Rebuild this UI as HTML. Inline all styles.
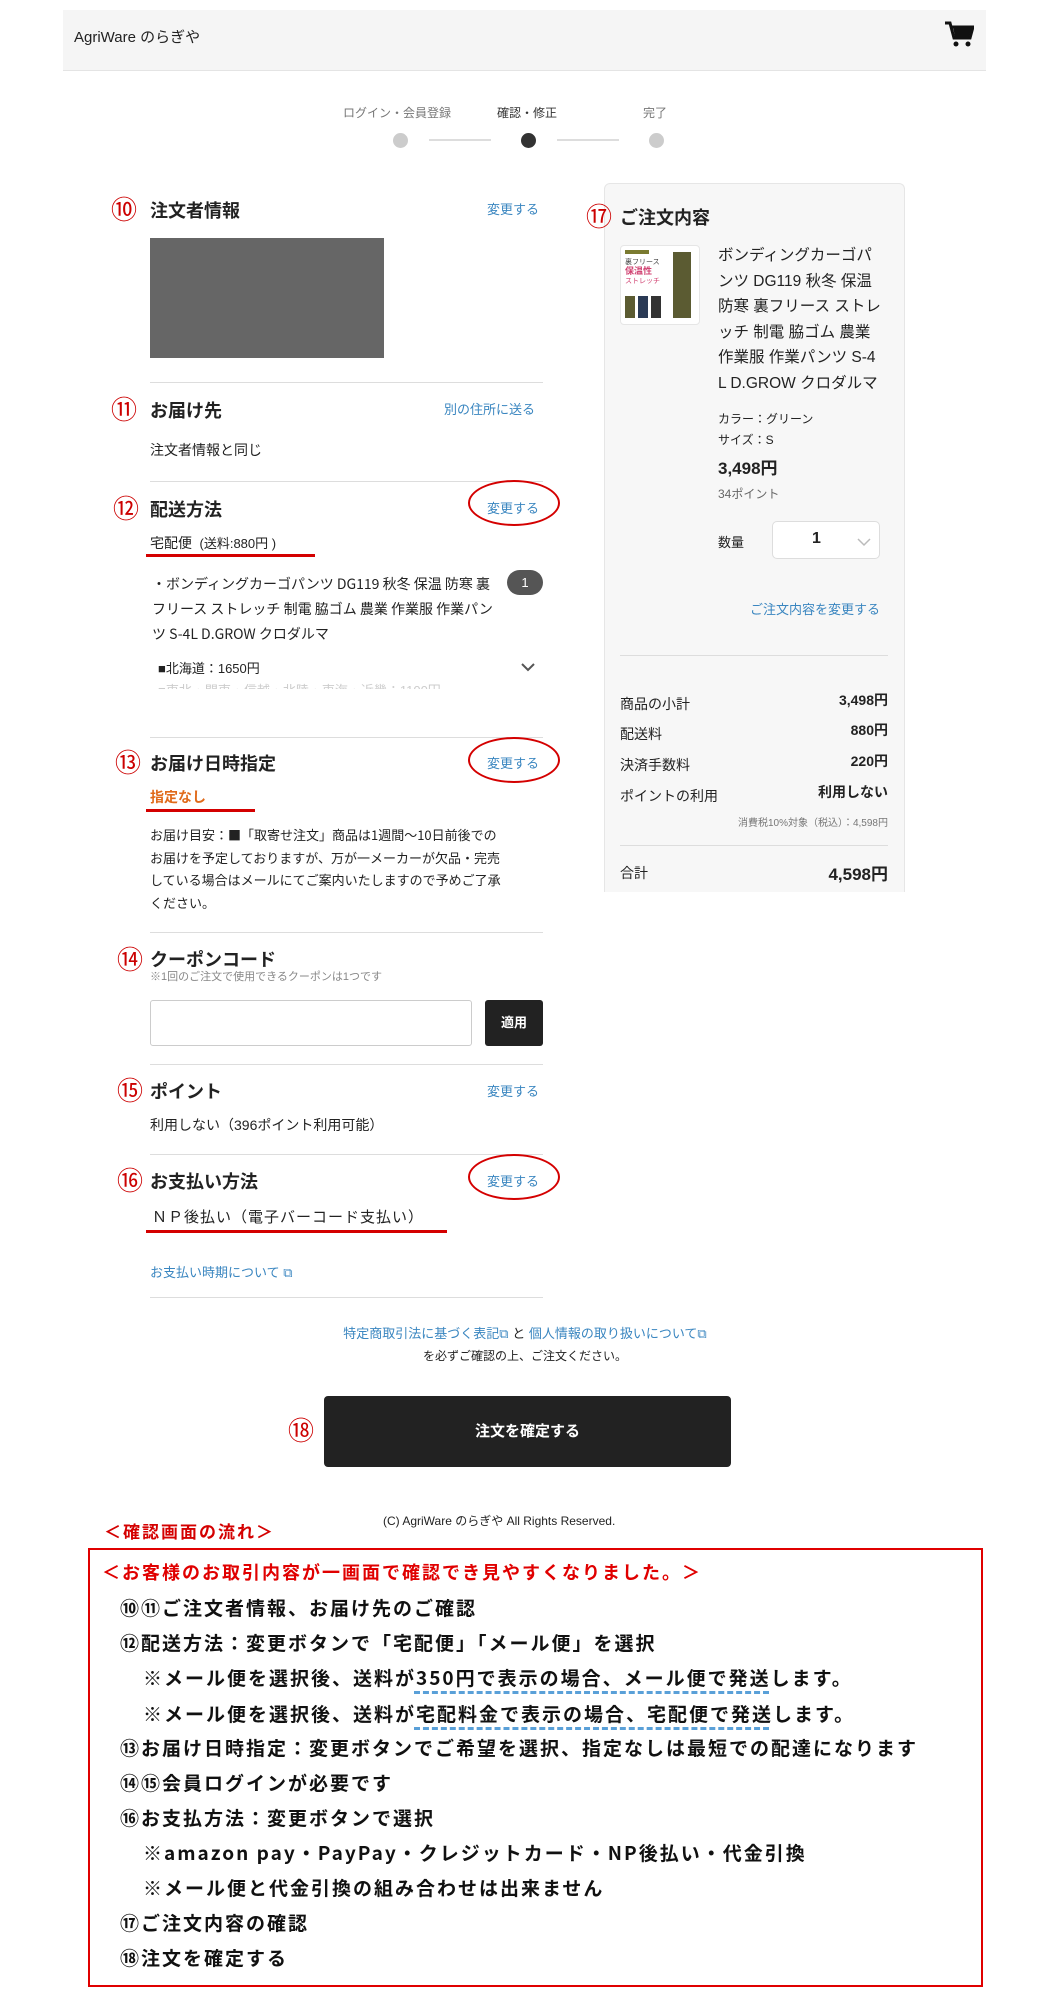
<!DOCTYPE html>
<html><head><meta charset="utf-8"><style>
*{margin:0;padding:0;box-sizing:border-box}
body{width:1050px;height:2000px;position:relative;background:#fff;font-family:"Liberation Sans","Noto Sans CJK JP",sans-serif;color:#222;overflow:hidden}
.a{position:absolute;white-space:nowrap}
.h{font-size:18px;font-weight:bold}
.lk{color:#3a86c0;font-size:13px}
.hr{position:absolute;left:150px;width:393px;height:1px;background:#ddd}
.num{position:absolute;color:#c00;font-size:26px;font-family:"Noto Sans CJK JP",sans-serif;line-height:1}
.ell{position:absolute;border:2.5px solid #d40000;border-radius:50%}
.ul{position:absolute;height:3px;background:#d40000}
.t{font-size:14px}
.f{font-family:"Noto Sans CJK JP",sans-serif;font-weight:bold;font-size:19px;letter-spacing:2px;color:#111}
.j{font-family:"Noto Sans CJK JP",sans-serif}
</style></head><body>
<div class="a" style="left:63px;top:10px;width:923px;height:61px;background:#f5f5f5;border-bottom:1px solid #e4e4e4"></div>
<div class="a" style="left:74px;top:26px;font-size:15px">AgriWare のらぎや</div>
<svg class="a" style="left:944px;top:20px" width="30" height="28" viewBox="0 0 30 28"><path d="M1 3h5l4 15h16l3-11H8" fill="none" stroke="#111" stroke-width="3"/><path d="M9 7h19l-3 10H11z" fill="#111"/><circle cx="12" cy="24" r="2.5" fill="#111"/><circle cx="24" cy="24" r="2.5" fill="#111"/></svg>
<div class="a" style="left:343px;top:104px;font-size:12px;color:#777">ログイン・会員登録</div>
<div class="a" style="left:497px;top:104px;font-size:12px;color:#333">確認・修正</div>
<div class="a" style="left:643px;top:104px;font-size:12px;color:#777">完了</div>
<div class="a" style="left:393px;top:133px;width:15px;height:15px;border-radius:50%;background:#ccc"></div>
<div class="a" style="left:521px;top:133px;width:15px;height:15px;border-radius:50%;background:#333"></div>
<div class="a" style="left:649px;top:133px;width:15px;height:15px;border-radius:50%;background:#ccc"></div>
<div class="a" style="left:429px;top:139px;width:62px;height:2px;background:#ddd"></div>
<div class="a" style="left:557px;top:139px;width:62px;height:2px;background:#ddd"></div>

<div class="num" style="left:111px;top:196px">⑩</div>
<div class="a h" style="left:150px;top:197px">注文者情報</div>
<div class="a lk" style="left:487px;top:199px">変更する</div>
<div class="a" style="left:150px;top:238px;width:234px;height:120px;background:#666"></div>
<div class="hr" style="top:382px"></div>
<div class="num" style="left:111px;top:396px">⑪</div>
<div class="a h" style="left:150px;top:397px">お届け先</div>
<div class="a lk" style="left:444px;top:399px">別の住所に送る</div>
<div class="a t" style="left:150px;top:440px">注文者情報と同じ</div>
<div class="hr" style="top:481px"></div>
<div class="num" style="left:113px;top:495px">⑫</div>
<div class="a h" style="left:150px;top:496px">配送方法</div>
<div class="ell" style="left:468px;top:480px;width:92px;height:46px"></div>
<div class="a lk" style="left:487px;top:498px">変更する</div>
<div class="a t" style="left:150px;top:533px">宅配便 <span style="font-size:13px">&nbsp;(送料:880円 )</span></div>
<div class="ul" style="left:146px;top:554px;width:169px"></div>
<div class="a j" style="left:152px;top:572px;font-size:14px;line-height:25px;white-space:normal;width:345px">・ボンディングカーゴパンツ DG119 秋冬 保温 防寒 裏フリース ストレッチ 制電 脇ゴム 農業 作業服 作業パンツ S-4L D.GROW クロダルマ</div>
<div class="a" style="left:507px;top:570px;width:36px;height:25px;border-radius:13px;background:#555;color:#fff;font-size:13px;text-align:center;line-height:25px">1</div>
<div class="a" style="left:158px;top:658px;font-size:13px">■北海道：1650円</div>
<svg class="a" style="left:520px;top:662px" width="16" height="12"><path d="M2 2l6 6 6-6" fill="none" stroke="#555" stroke-width="2"/></svg>
<div class="a" style="left:158px;top:680px;font-size:13px;color:#ccc;height:9px;overflow:hidden">■東北・関東・信越・北陸・東海・近畿：1100円</div>
<div class="hr" style="top:737px"></div>
<div class="num" style="left:115px;top:749px">⑬</div>
<div class="a h" style="left:150px;top:750px">お届け日時指定</div>
<div class="ell" style="left:468px;top:737px;width:92px;height:46px"></div>
<div class="a lk" style="left:487px;top:753px">変更する</div>
<div class="a" style="left:150px;top:787px;font-size:14px;font-weight:bold;color:#e06a1a">指定なし</div>
<div class="ul" style="left:146px;top:809px;width:109px"></div>
<div class="a j" style="left:150px;top:824px;font-size:13px;line-height:22.5px;white-space:normal;width:390px">お届け目安：■「取寄せ注文」商品は1週間～10日前後での<br>お届けを予定しておりますが、万が一メーカーが欠品・完売<br>している場合はメールにてご案内いたしますので予めご了承<br>ください。</div>
<div class="hr" style="top:932px"></div>
<div class="num" style="left:117px;top:946px">⑭</div>
<div class="a h" style="left:150px;top:946px">クーポンコード</div>
<div class="a" style="left:150px;top:968px;font-size:11px;color:#888">※1回のご注文で使用できるクーポンは1つです</div>
<div class="a" style="left:150px;top:1000px;width:322px;height:46px;border:1px solid #ccc;border-radius:3px"></div>
<div class="a" style="left:485px;top:1000px;width:58px;height:46px;background:#222;border-radius:3px;color:#fff;font-size:13px;font-weight:bold;text-align:center;line-height:46px">適用</div>
<div class="hr" style="top:1064px"></div>
<div class="num" style="left:117px;top:1077px">⑮</div>
<div class="a h" style="left:150px;top:1078px">ポイント</div>
<div class="a lk" style="left:487px;top:1081px">変更する</div>
<div class="a t" style="left:150px;top:1115px">利用しない（396ポイント利用可能）</div>
<div class="hr" style="top:1154px"></div>
<div class="num" style="left:117px;top:1167px">⑯</div>
<div class="a h" style="left:150px;top:1168px">お支払い方法</div>
<div class="ell" style="left:468px;top:1154px;width:92px;height:46px"></div>
<div class="a lk" style="left:487px;top:1171px">変更する</div>
<div class="a" style="left:152px;top:1206px;font-size:15px;letter-spacing:1px">ＮＰ後払い（電子バーコード支払い）</div>
<div class="ul" style="left:146px;top:1230px;width:301px"></div>
<div class="a lk" style="left:150px;top:1262px">お支払い時期について ⧉</div>
<div class="hr" style="top:1297px"></div>
<div class="a" style="left:0;width:1050px;top:1323px;text-align:center;font-size:13px;color:#3a86c0">特定商取引法に基づく表記⧉ <span style="color:#222">と</span> 個人情報の取り扱いについて⧉</div>
<div class="a" style="left:0;width:1050px;top:1347px;text-align:center;font-size:12px">を必ずご確認の上、ご注文ください。</div>
<div class="num" style="left:288px;top:1417px">⑱</div>
<div class="a" style="left:324px;top:1396px;width:407px;height:71px;background:#222;border-radius:4px;color:#fff;font-size:15px;font-weight:bold;text-align:center;line-height:71px">注文を確定する</div>
<div class="a" style="left:383px;top:1512px;font-size:12px">(C) AgriWare のらぎや All Rights Reserved.</div>

<div class="a" style="left:604px;top:183px;width:301px;height:709px;background:#f7f7f7;border:1px solid #e6e6e6;border-bottom:none;border-radius:6px 6px 0 0"></div>
<div class="num" style="left:586px;top:203px">⑰</div>
<div class="a h" style="left:620px;top:204px">ご注文内容</div>
<div class="a" style="left:620px;top:245px;width:80px;height:80px;background:#fff;border:1px solid #e6e6e6;border-radius:4px;overflow:hidden">
<div style="position:absolute;left:4px;top:4px;width:24px;height:4px;background:#7a7a30"></div>
<div style="position:absolute;left:4px;top:12px;font-size:7px;color:#444;line-height:9px">裏フリース<br><span style="color:#d04070;font-weight:bold;font-size:9px">保温性</span><br><span style="color:#d04070">ストレッチ</span></div>
<div style="position:absolute;left:52px;top:6px;width:18px;height:66px;background:#5b5b32"></div>
<div style="position:absolute;left:4px;top:50px;width:10px;height:22px;background:#5b5b32"></div>
<div style="position:absolute;left:17px;top:50px;width:10px;height:22px;background:#2a3a55"></div>
<div style="position:absolute;left:30px;top:50px;width:10px;height:22px;background:#333"></div>
</div>
<div class="a" style="left:718px;top:243px;font-size:15.5px;line-height:25.5px">ボンディングカーゴパ<br>ンツ DG119 秋冬 保温<br>防寒 裏フリース ストレ<br>ッチ 制電 脇ゴム 農業<br>作業服 作業パンツ S-4<br>L D.GROW クロダルマ</div>
<div class="a" style="left:718px;top:410px;font-size:12px">カラー：グリーン</div>
<div class="a" style="left:718px;top:431px;font-size:12px">サイズ：S</div>
<div class="a" style="left:718px;top:454px;font-size:17px;font-weight:bold">3,498円</div>
<div class="a" style="left:718px;top:485px;font-size:12px;color:#666">34ポイント</div>
<div class="a" style="left:718px;top:532px;font-size:13px">数量</div>
<div class="a" style="left:772px;top:521px;width:108px;height:38px;background:#fff;border:1px solid #ddd;border-radius:5px"></div>
<div class="a" style="left:812px;top:530px;font-size:16px;font-weight:bold">1</div>
<svg class="a" style="left:857px;top:537px" width="14" height="10"><path d="M1 2l6 6 6-6" fill="none" stroke="#bbb" stroke-width="1.5"/></svg>
<div class="a lk" style="left:750px;top:599px">ご注文内容を変更する</div>
<div class="a" style="left:620px;top:655px;width:268px;height:1px;background:#ddd"></div>
<div class="a" style="left:620px;top:694px;font-size:14px">商品の小計</div><div class="a" style="right:162px;top:690px;font-size:14px;font-weight:bold">3,498円</div>
<div class="a" style="left:620px;top:724px;font-size:14px">配送料</div><div class="a" style="right:162px;top:720px;font-size:14px;font-weight:bold">880円</div>
<div class="a" style="left:620px;top:755px;font-size:14px">決済手数料</div><div class="a" style="right:162px;top:751px;font-size:14px;font-weight:bold">220円</div>
<div class="a" style="left:620px;top:786px;font-size:14px">ポイントの利用</div><div class="a" style="right:162px;top:782px;font-size:14px;font-weight:bold">利用しない</div>
<div class="a" style="right:162px;top:814px;font-size:10px;color:#777">消費税10%対象（税込）：4,598円</div>
<div class="a" style="left:620px;top:845px;width:268px;height:1px;background:#ddd"></div>
<div class="a" style="left:620px;top:863px;font-size:14px">合計</div><div class="a" style="right:162px;top:860px;font-size:17px;font-weight:bold">4,598円</div>

<div class="a" style="left:104px;top:1518px;font-family:'Noto Sans CJK JP',sans-serif;font-weight:bold;font-size:17px;color:#d40000;letter-spacing:2px">＜確認画面の流れ＞</div>
<div class="a" style="left:88px;top:1548px;width:895px;height:439px;border:2.5px solid #e00000"></div>
<div class="a f" style="left:102px;top:1559px;color:#e00000;font-size:18px">＜お客様のお取引内容が一画面で確認でき見やすくなりました。＞</div>
<div class="a f" style="left:120px;top:1594px">⑩⑪ご注文者情報、お届け先のご確認</div>
<div class="a f" style="left:120px;top:1629px">⑫配送方法：変更ボタンで「宅配便」「メール便」を選択</div>
<div class="a f" style="left:143px;top:1664px">※メール便を選択後、送料が350円で表示の場合、メール便で発送します。</div>
<div class="a" style="left:414px;top:1691px;width:355px;border-top:3px dashed #5aa0d8"></div>
<div class="a f" style="left:143px;top:1700px">※メール便を選択後、送料が宅配料金で表示の場合、宅配便で発送します。</div>
<div class="a" style="left:414px;top:1727px;width:355px;border-top:3px dashed #5aa0d8"></div>
<div class="a f" style="left:120px;top:1734px">⑬お届け日時指定：変更ボタンでご希望を選択、指定なしは最短での配達になります</div>
<div class="a f" style="left:120px;top:1769px">⑭⑮会員ログインが必要です</div>
<div class="a f" style="left:120px;top:1804px">⑯お支払方法：変更ボタンで選択</div>
<div class="a f" style="left:143px;top:1839px">※amazon pay・PayPay・クレジットカード・NP後払い・代金引換</div>
<div class="a f" style="left:143px;top:1874px">※メール便と代金引換の組み合わせは出来ません</div>
<div class="a f" style="left:120px;top:1909px">⑰ご注文内容の確認</div>
<div class="a f" style="left:120px;top:1944px">⑱注文を確定する</div>
</body></html>
